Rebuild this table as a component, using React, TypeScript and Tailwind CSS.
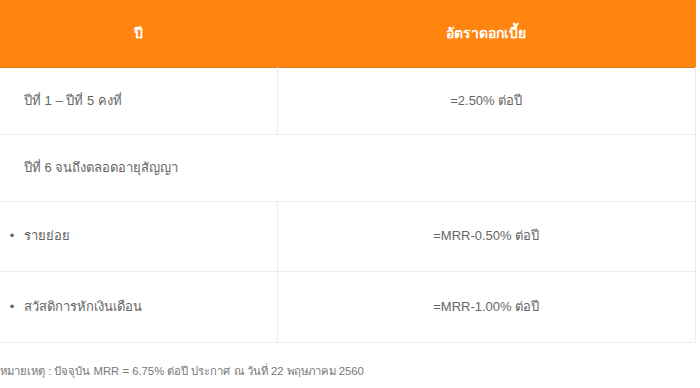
import React from 'react';

const rows = [
  { label: 'ปีที่ 1 – ปีที่ 5 คงที่', rate: '=2.50% ต่อปี', bullet: false, h: 'h-[67px]' },
  { label: 'ปีที่ 6 จนถึงตลอดอายุสัญญา', rate: null, bullet: false, h: 'h-[67px]' },
  { label: 'รายย่อย', rate: '=MRR-0.50% ต่อปี', bullet: true, h: 'h-[70px]' },
  { label: 'สวัสดิการหักเงินเดือน', rate: '=MRR-1.00% ต่อปี', bullet: true, h: 'h-[71px]' },
];

const App: React.FC = () => {
  return (
    <div className="w-[700px] h-[388px] bg-white overflow-hidden text-[13px] text-[#666]" style={{ fontFamily: 'Tahoma, "Liberation Sans", "Noto Sans", sans-serif' }}>
      <table className="w-[696px] border-collapse table-fixed">
        <thead>
          <tr className="h-[67px] bg-[#ff850f] text-white font-bold text-[14px] border-b border-[#e07a1a]">
            <th className="w-[277px] text-center font-bold">ปี</th>
            <th className="text-center font-bold">อัตราดอกเบี้ย</th>
          </tr>
        </thead>
        <tbody>
          {rows.map((row, i) => (
            <tr key={i} className={`${row.h} border-b border-[#ececec]`}>
              {row.rate === null ? (
                <td colSpan={2} className="pl-6 border-r border-[#ececec]">{row.label}</td>
              ) : (
                <>
                  <td className="border-r border-[#ececec]">
                    {row.bullet ? (
                      <div className="flex items-center">
                        <span className="w-6 text-center text-[13px]">•</span>
                        <span>{row.label}</span>
                      </div>
                    ) : (
                      <span className="pl-6">{row.label}</span>
                    )}
                  </td>
                  <td className="text-center border-r border-[#ececec]">{row.rate}</td>
                </>
              )}
            </tr>
          ))}
        </tbody>
      </table>
      <p className="mt-[20px] text-[11.3px] text-[#777]">หมายเหตุ : ปัจจุบัน MRR = 6.75% ต่อปี ประกาศ ณ วันที่ 22 พฤษภาคม 2560</p>
    </div>
  );
};

export default App;
